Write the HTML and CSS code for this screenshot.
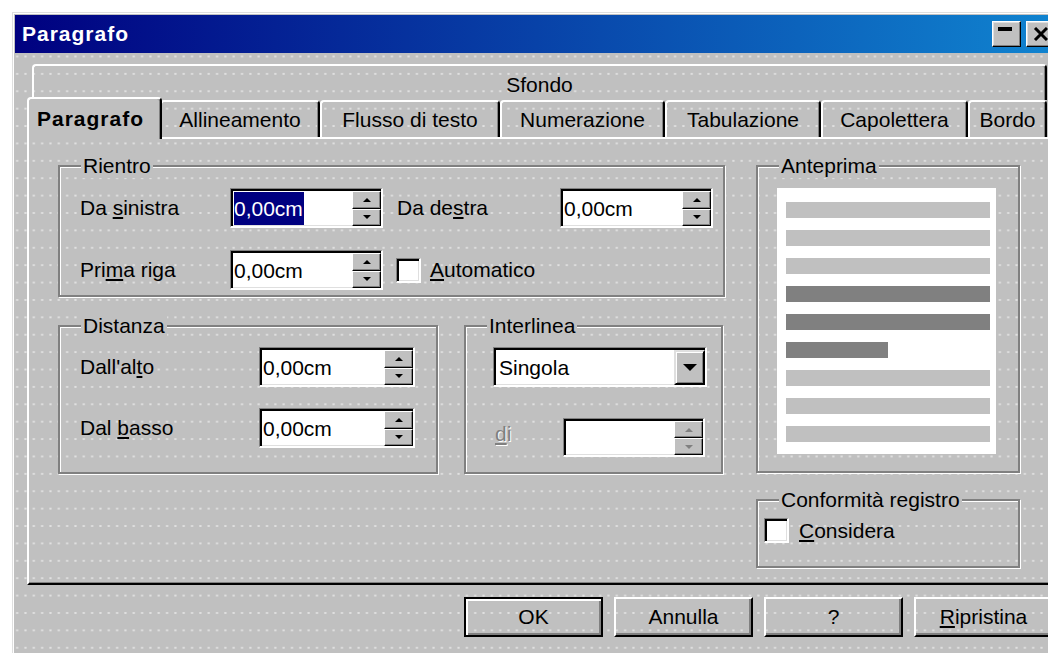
FILE: index.html
```html
<!DOCTYPE html>
<html lang="it">
<head>
<meta charset="utf-8">
<title>Paragrafo</title>
<link rel="stylesheet" href="styles.css">
</head>
<body>
<div class="dialog">
  <div class="titlebar">
    <span class="title">Paragrafo</span>
    <div class="title-buttons">
      <button class="tbtn" aria-label="Riduci"><span class="min-glyph"></span></button>
      <button class="tbtn" aria-label="Chiudi">
        <svg class="close-glyph" width="16" height="14" viewBox="0 0 16 14"><path d="M2 1 L14 13 M14 1 L2 13" stroke="#000" stroke-width="3" fill="none"/></svg>
      </button>
    </div>
  </div>

  <div class="dialog-body">
    <div class="tabs">
      <div class="tab-row tab-row-back">
        <div class="tab-back">Sfondo</div>
      </div>
      <div class="tab-row tab-row-front">
        <div class="tab tab-active">Paragrafo</div>
        <div class="tab">Allineamento</div>
        <div class="tab">Flusso di testo</div>
        <div class="tab">Numerazione</div>
        <div class="tab">Tabulazione</div>
        <div class="tab">Capolettera</div>
        <div class="tab">Bordo</div>
      </div>
    </div>

    <div class="panel">
      <div class="col col-left">
        <div class="group group-rientro">
          <div class="group-title">Rientro</div>
          <div class="form-grid rientro-grid">
            <span class="lbl">Da <u>s</u>inistra</span>
            <div class="field spin-field">
              <span class="value"><span class="selected">0,00cm</span></span>
              <div class="spin"><span class="spin-btn"><i class="arr-up"></i></span><span class="spin-btn"><i class="arr-down"></i></span></div>
            </div>
            <span class="lbl lbl-right">Da de<u>s</u>tra</span>
            <div class="field spin-field">
              <span class="value">0,00cm</span>
              <div class="spin"><span class="spin-btn"><i class="arr-up"></i></span><span class="spin-btn"><i class="arr-down"></i></span></div>
            </div>

            <span class="lbl">Pri<u>m</u>a riga</span>
            <div class="field spin-field">
              <span class="value">0,00cm</span>
              <div class="spin"><span class="spin-btn"><i class="arr-up"></i></span><span class="spin-btn"><i class="arr-down"></i></span></div>
            </div>
            <label class="check check-auto"><span class="checkbox"></span><span><u>A</u>utomatico</span></label>
          </div>
        </div>

        <div class="group-row">
          <div class="group group-distanza">
            <div class="group-title">Distanza</div>
            <div class="form-grid distanza-grid">
              <span class="lbl">Dall'al<u>t</u>o</span>
              <div class="field spin-field">
                <span class="value">0,00cm</span>
                <div class="spin"><span class="spin-btn"><i class="arr-up"></i></span><span class="spin-btn"><i class="arr-down"></i></span></div>
              </div>
              <span class="lbl">Dal <u>b</u>asso</span>
              <div class="field spin-field">
                <span class="value">0,00cm</span>
                <div class="spin"><span class="spin-btn"><i class="arr-up"></i></span><span class="spin-btn"><i class="arr-down"></i></span></div>
              </div>
            </div>
          </div>

          <div class="group group-interlinea">
            <div class="group-title">Interlinea</div>
            <div class="field select-field">
              <span class="value">Singola</span>
              <span class="drop-btn"><i class="arr-drop"></i></span>
            </div>
            <div class="di-row">
              <span class="lbl lbl-disabled"><u>d</u>i</span>
              <div class="field spin-field spin-disabled">
                <span class="value"></span>
                <div class="spin"><span class="spin-btn"><i class="arr-up"></i></span><span class="spin-btn"><i class="arr-down"></i></span></div>
              </div>
            </div>
          </div>
        </div>
      </div>

      <div class="col col-right">
        <div class="group group-anteprima">
          <div class="group-title">Anteprima</div>
          <div class="preview">
            <span class="bar"></span>
            <span class="bar"></span>
            <span class="bar"></span>
            <span class="bar bar-dark"></span>
            <span class="bar bar-dark"></span>
            <span class="bar bar-dark bar-short"></span>
            <span class="bar"></span>
            <span class="bar"></span>
            <span class="bar"></span>
          </div>
        </div>

        <div class="group group-registro">
          <div class="group-title">Conformità registro</div>
          <label class="check check-registro"><span class="checkbox"></span><span><u>C</u>onsidera</span></label>
        </div>
      </div>
    </div>

    <div class="buttons">
      <button class="btn btn-default">OK</button>
      <button class="btn">Annulla</button>
      <button class="btn">?</button>
      <button class="btn"><u>R</u>ipristina</button>
    </div>
  </div>
</div>
</body>
</html>
```

FILE: styles.css
```css
* { box-sizing: border-box; }

html, body {
  margin: 0;
  padding: 0;
}

body {
  width: 1048px;
  height: 653px;
  overflow: hidden;
  background: #fff;
  font-family: "Liberation Sans", Arial, sans-serif;
  font-size: 21px;
  color: #000;
}

/* window frame */
.dialog {
  width: 1050px;
  height: 641px;
  margin: 12px 0 0 12px;
  padding: 2px 3px 0 2px;
  border-top: 1px solid #dfdfdf;
  border-left: 1px solid #dfdfdf;
  box-shadow: inset 1px 1px 0 #fff;
  background-color: #c0c0c0;
  background-image: radial-gradient(circle, rgba(236, 236, 236, 0.75) 0 0.9px, transparent 1.3px);
  background-size: 8.33px 17.4px;
}

.titlebar {
  height: 38px;
  display: flex;
  align-items: center;
  padding: 0 4px 0 7px;
  background: linear-gradient(to right, #000080, #1084d0);
}

.title {
  color: #fff;
  font-weight: bold;
  font-size: 21px;
  letter-spacing: 1px;
}

.title-buttons {
  margin-left: auto;
  display: flex;
  gap: 5px;
}

.tbtn {
  width: 29px;
  height: 26px;
  padding: 0;
  display: flex;
  align-items: flex-start;
  justify-content: center;
  background: #c0c0c0;
  border: 1px solid;
  border-color: #fff #000 #000 #fff;
  box-shadow: inset -1px -1px 0 #808080, inset 1px 1px 0 #dfdfdf;
}

.min-glyph {
  display: block;
  width: 14px;
  height: 4px;
  margin-top: 5px;
  margin-right: 3px;
  background: #000;
}

.close-glyph { margin-top: 5px; }

/* tabs + page */
.dialog-body {
  padding: 11px 3px 0 12px;
}

.tab-row { display: flex; }

.tab-row-back {
  height: 36px;
  padding: 0 9px 0 5px;
}

.tab-back {
  flex: 1;
  border-top: 2px solid #fff;
  border-left: 2px solid #fff;
  border-right: 2px solid #000;
  border-radius: 4px 4px 0 0;
  box-shadow: inset -1px 0 0 #808080;
  text-align: center;
  line-height: 24px;
  padding-top: 7px;
}

.tab-row-front {
  height: 37px;
  align-items: flex-start;
}

.tab {
  height: 37px;
  flex: none;
  border-top: 2px solid #fff;
  border-left: 2px solid #fff;
  border-right: 2px solid #000;
  border-radius: 4px 4px 0 0;
  box-shadow: inset -1px 0 0 #808080;
  text-align: center;
  line-height: 35px;
  white-space: nowrap;
}

.tab:nth-child(2) { width: 160px; }
.tab:nth-child(3) { width: 180px; }
.tab:nth-child(4) { width: 165px; }
.tab:nth-child(5) { width: 156px; }
.tab:nth-child(6) { width: 147px; }
.tab:nth-child(7) { width: 79px; }

.tab-active {
  position: relative;
  z-index: 1;
  width: 135px;
  height: 42px;
  margin-top: -3px;
  margin-right: -2px;
  padding-left: 8px;
  text-align: left;
  line-height: 40px;
  font-weight: bold;
  letter-spacing: 1px;
  background-color: #c0c0c0;
}

.panel {
  height: 448px;
  display: flex;
  gap: 31px;
  padding: 26px 0 0 29px;
  border-top: 2px solid #fff;
  border-left: 2px solid #fff;
  border-right: 2px solid #000;
  border-bottom: 2px solid #000;
  box-shadow: inset -1px -1px 0 #808080;
}

.col {
  display: flex;
  flex-direction: column;
}

.col-left { width: 667px; gap: 28px; }
.col-right { width: 264px; gap: 26px; }

/* etched group boxes */
.group {
  border: 2px solid #808080;
  box-shadow: inset 1px 1px 0 #fff, 1px 1px 0 #fff;
}

.group-title {
  width: fit-content;
  margin: -13px 0 0 21px;
  padding: 0 2px;
  line-height: 24px;
  background: #c0c0c0;
}

.group-rientro { height: 132px; }

.form-grid {
  display: grid;
  align-items: center;
}

.rientro-grid {
  margin-top: 10px;
  padding-left: 20px;
  grid-template-columns: 150px 153px 177px 153px;
  grid-auto-rows: 40px;
  row-gap: 22px;
}

.lbl { white-space: nowrap; }
.lbl-right { padding-left: 14px; }

.group-row {
  display: flex;
  gap: 26px;
}

.group-distanza { width: 380px; height: 149px; }

.distanza-grid {
  margin-top: 9px;
  padding-left: 20px;
  grid-template-columns: 179px 156px;
  grid-auto-rows: 40px;
  row-gap: 21px;
}

.group-interlinea {
  width: 259px;
  height: 149px;
  padding-left: 27px;
}

.group-interlinea .group-title { margin-left: -6px; }

/* sunken edit fields */
.field {
  height: 40px;
  display: flex;
  align-items: stretch;
  background: #fff;
  border-style: solid;
  border-width: 1px 2px 2px 1px;
  border-color: #808080 #fff #fff #808080;
  box-shadow: inset 2px 2px 0 #000, inset -1px -1px 0 #dfdfdf;
  padding: 2px 0 0 2px;
}

.value {
  flex: 1;
  display: flex;
  align-items: center;
  padding-left: 1px;
  white-space: nowrap;
}

.selected {
  background: #000080;
  color: #fff;
  line-height: 33px;
  padding-right: 1px;
}

.spin {
  width: 29px;
  display: flex;
  flex-direction: column;
}

.spin-btn {
  flex: 1;
  display: flex;
  align-items: center;
  justify-content: center;
  background: #c0c0c0;
  border: 1px solid;
  border-color: #fff #000 #000 #fff;
  box-shadow: inset -1px -1px 0 #808080;
}

.arr-up, .arr-down, .arr-drop {
  display: block;
  width: 0;
  height: 0;
  border-left: 4px solid transparent;
  border-right: 4px solid transparent;
}

.arr-up { border-bottom: 4px solid #000; }
.arr-down { border-top: 4px solid #000; }

.spin-disabled .arr-up { border-bottom-color: #808080; }
.spin-disabled .arr-down { border-top-color: #808080; }

.select-field {
  width: 214px;
  margin-top: 9px;
}

.select-field .value { padding-left: 3px; }

.drop-btn {
  width: 31px;
  display: flex;
  align-items: center;
  justify-content: center;
  background: #c0c0c0;
  border: 2px solid;
  border-color: #dfdfdf #000 #000 #dfdfdf;
  box-shadow: inset 1px 1px 0 #fff, inset -1px -1px 0 #808080;
}

.arr-drop {
  border-left-width: 7px;
  border-right-width: 7px;
  border-top: 7px solid #000;
}

.di-row {
  display: flex;
  align-items: center;
  margin-top: 31px;
  padding-left: 2px;
}

.lbl-disabled {
  width: 68px;
  color: #808080;
  text-shadow: 1px 1px 0 #fff;
  line-height: 24px;
  margin-top: -8px;
}

.spin-disabled {
  width: 142px;
  height: 39px;
}

/* checkboxes */
.check {
  display: flex;
  align-items: center;
  gap: 10px;
  white-space: nowrap;
}

.checkbox {
  flex: none;
  width: 25px;
  height: 25px;
  background: #fff;
  border-style: solid;
  border-width: 1px 2px 2px 1px;
  border-color: #808080 #fff #fff #808080;
  box-shadow: inset 2px 2px 0 #000, inset -1px -1px 0 #dfdfdf;
}

.check-auto {
  grid-column: 3 / 5;
  padding-left: 13px;
  gap: 9px;
}

.check-registro {
  margin: 6px 0 0 6px;
}

/* preview */
.group-anteprima { height: 308px; }

.preview {
  width: 219px;
  height: 266px;
  margin: 10px 0 0 19px;
  padding: 14px 6px 0 9px;
  background: #fff;
  display: flex;
  flex-direction: column;
  gap: 12px;
}

.bar {
  display: block;
  height: 16px;
  background: #c0c0c0;
}

.bar-dark { background: #808080; }
.bar-short { width: 102px; }

.group-registro { height: 69px; }

/* command buttons */
.buttons {
  display: flex;
  justify-content: flex-end;
  gap: 11px;
  margin-top: 12px;
  margin-right: 3px;
}

.btn {
  width: 139px;
  height: 40px;
  padding: 0;
  font: inherit;
  color: #000;
  background: transparent;
  border: 2px solid;
  border-color: #fff #000 #000 #fff;
  box-shadow: inset -2px -2px 0 #808080;
}

.btn-default {
  border: 2px solid #000;
  box-shadow: inset 2px 2px 0 #fff, inset -2px -2px 0 #808080;
}
```
